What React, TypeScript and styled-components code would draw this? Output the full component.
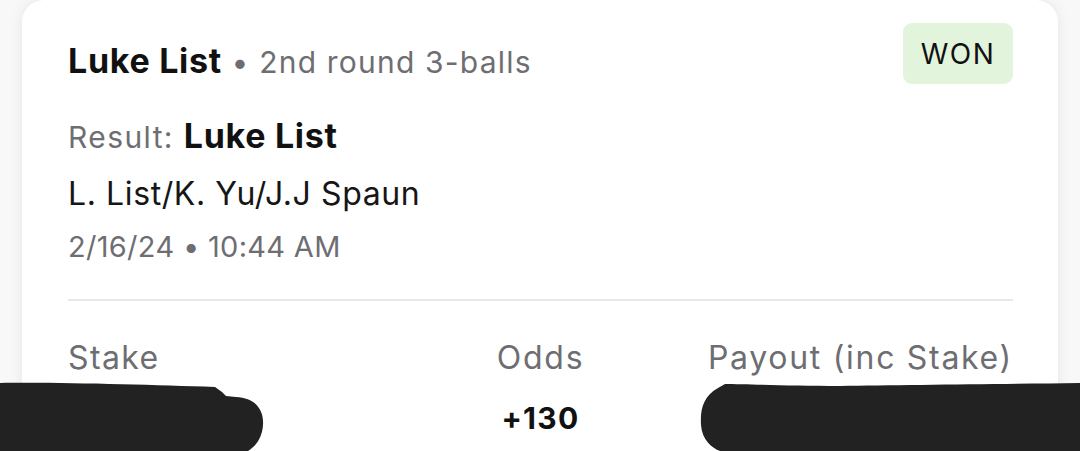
import React from "react";
import styled, { createGlobalStyle } from "styled-components";

const Global = createGlobalStyle`
  html, body { margin: 0; padding: 0; background: #f8f8f8; }
  body { font-family: Inter, "Noto Sans", sans-serif; overflow: hidden; }
`;

const Page = styled.div`
  position: relative;
  width: 1080px;
  height: 451px;
  overflow: hidden;
  background: #f8f8f8;
`;

const Card = styled.div`
  margin: 0 22px;
  height: 480px;
  background: #fff;
  border-radius: 22px;
  box-shadow: 0 0 14px rgba(0, 0, 0, 0.08);
  padding: 23px 45px 0 46px;
  box-sizing: border-box;
`;

const Header = styled.div`
  display: flex;
  justify-content: space-between;
  align-items: flex-start;
`;

const Line = styled.div<{ $mt: number; $lh: number; $size: number; $bold?: boolean; $color?: string }>`
  margin-top: ${(p) => p.$mt}px;
  line-height: ${(p) => p.$lh}px;
  font-size: ${(p) => p.$size}px;
  font-weight: ${(p) => (p.$bold ? 700 : 400)};
  color: ${(p) => p.$color ?? "#161616"};
  white-space: nowrap;
`;

const Bold = styled.span<{ $size: number; $ls?: number }>`
  font-weight: 700;
  font-size: ${(p) => p.$size}px;
  letter-spacing: ${(p) => p.$ls ?? 0}px;
  color: #111;
`;

const Muted = styled.span<{ $size: number; $ls?: number }>`
  font-weight: 400;
  font-size: ${(p) => p.$size}px;
  letter-spacing: ${(p) => p.$ls ?? 0}px;
  color: #6e6e72;
`;

const Badge = styled.div`
  width: 110px;
  height: 61px;
  border-radius: 9px;
  background: #e3f4dc;
  color: #111;
  font-size: 28px;
  letter-spacing: 1.4px;
  display: flex;
  align-items: center;
  justify-content: center;
  box-sizing: border-box;
`;

const Players = styled.span`
  font-size: 32px;
  letter-spacing: 0.6px;
  color: #161616;
`;

const Divider = styled.div`
  margin-top: 34px;
  height: 2px;
  background: #e8e8ea;
`;

const Stats = styled.div`
  display: grid;
  grid-template-columns: 1fr auto 1fr;
  grid-template-rows: 40px 40px;
  margin-top: 37px;
  row-gap: 20px;
`;

const Cell = styled.div<{ $align: "start" | "center" | "end"; $size: number }>`
  justify-self: ${(p) => p.$align};
  font-size: ${(p) => p.$size}px;
  line-height: 40px;
  white-space: nowrap;
`;

const Redactions = styled.svg`
  position: absolute;
  left: 0;
  top: 0;
  width: 1080px;
  height: 451px;
  pointer-events: none;
`;

export default function App() {
  return (
    <>
      <Global />
      <Page>
        <Card>
          <Header>
            <Line $mt={18} $lh={40} $size={34} $bold>
              <Bold $size={34} $ls={0.7}>Luke List</Bold>
              <Muted $size={30} $ls={1.2}> • 2nd round 3-balls</Muted>
            </Line>
            <Badge>WON</Badge>
          </Header>
          <Line $mt={32} $lh={40} $size={34}>
            <Muted $size={30} $ls={1.4}>Result: </Muted>
            <Bold $size={34} $ls={0.7}>Luke List</Bold>
          </Line>
          <Line $mt={17} $lh={40} $size={32}>
            <Players>L. List/K. Yu/J.J Spaun</Players>
          </Line>
          <Line $mt={15} $lh={36} $size={29}>
            <Muted $size={29} $ls={0.3}>2/16/24 • 10:44 AM</Muted>
          </Line>
          <Divider />
          <Stats>
            <Cell $align="start" $size={32}><Muted $size={32} $ls={1.4}>Stake</Muted></Cell>
            <Cell $align="center" $size={32}><Muted $size={32} $ls={1.8}>Odds</Muted></Cell>
            <Cell $align="end" $size={32}><Muted $size={32} $ls={1.7}>Payout (inc Stake)</Muted></Cell>
            <Cell $align="start" $size={30} />
            <Cell $align="center" $size={30}><Bold $size={30} $ls={1.3}>+130</Bold></Cell>
            <Cell $align="end" $size={30} />
          </Stats>
        </Card>
        <Redactions viewBox="0 0 1080 451">
          <path
            d="M0 383 C 60 382, 150 385, 215 387 L 222 392 L 226 396 L 236 397 C 256 398, 264 410, 263 425 C 262 440, 254 447, 248 451 L 0 451 Z"
            fill="#222"
          />
          <path
            d="M1080 383 C 1000 384, 900 385, 840 386 C 790 386, 745 384, 725 384 L 718 388 C 704 396, 700 408, 701 425 C 702 440, 712 448, 720 451 L 1080 451 Z"
            fill="#222"
          />
        </Redactions>
      </Page>
    </>
  );
}
